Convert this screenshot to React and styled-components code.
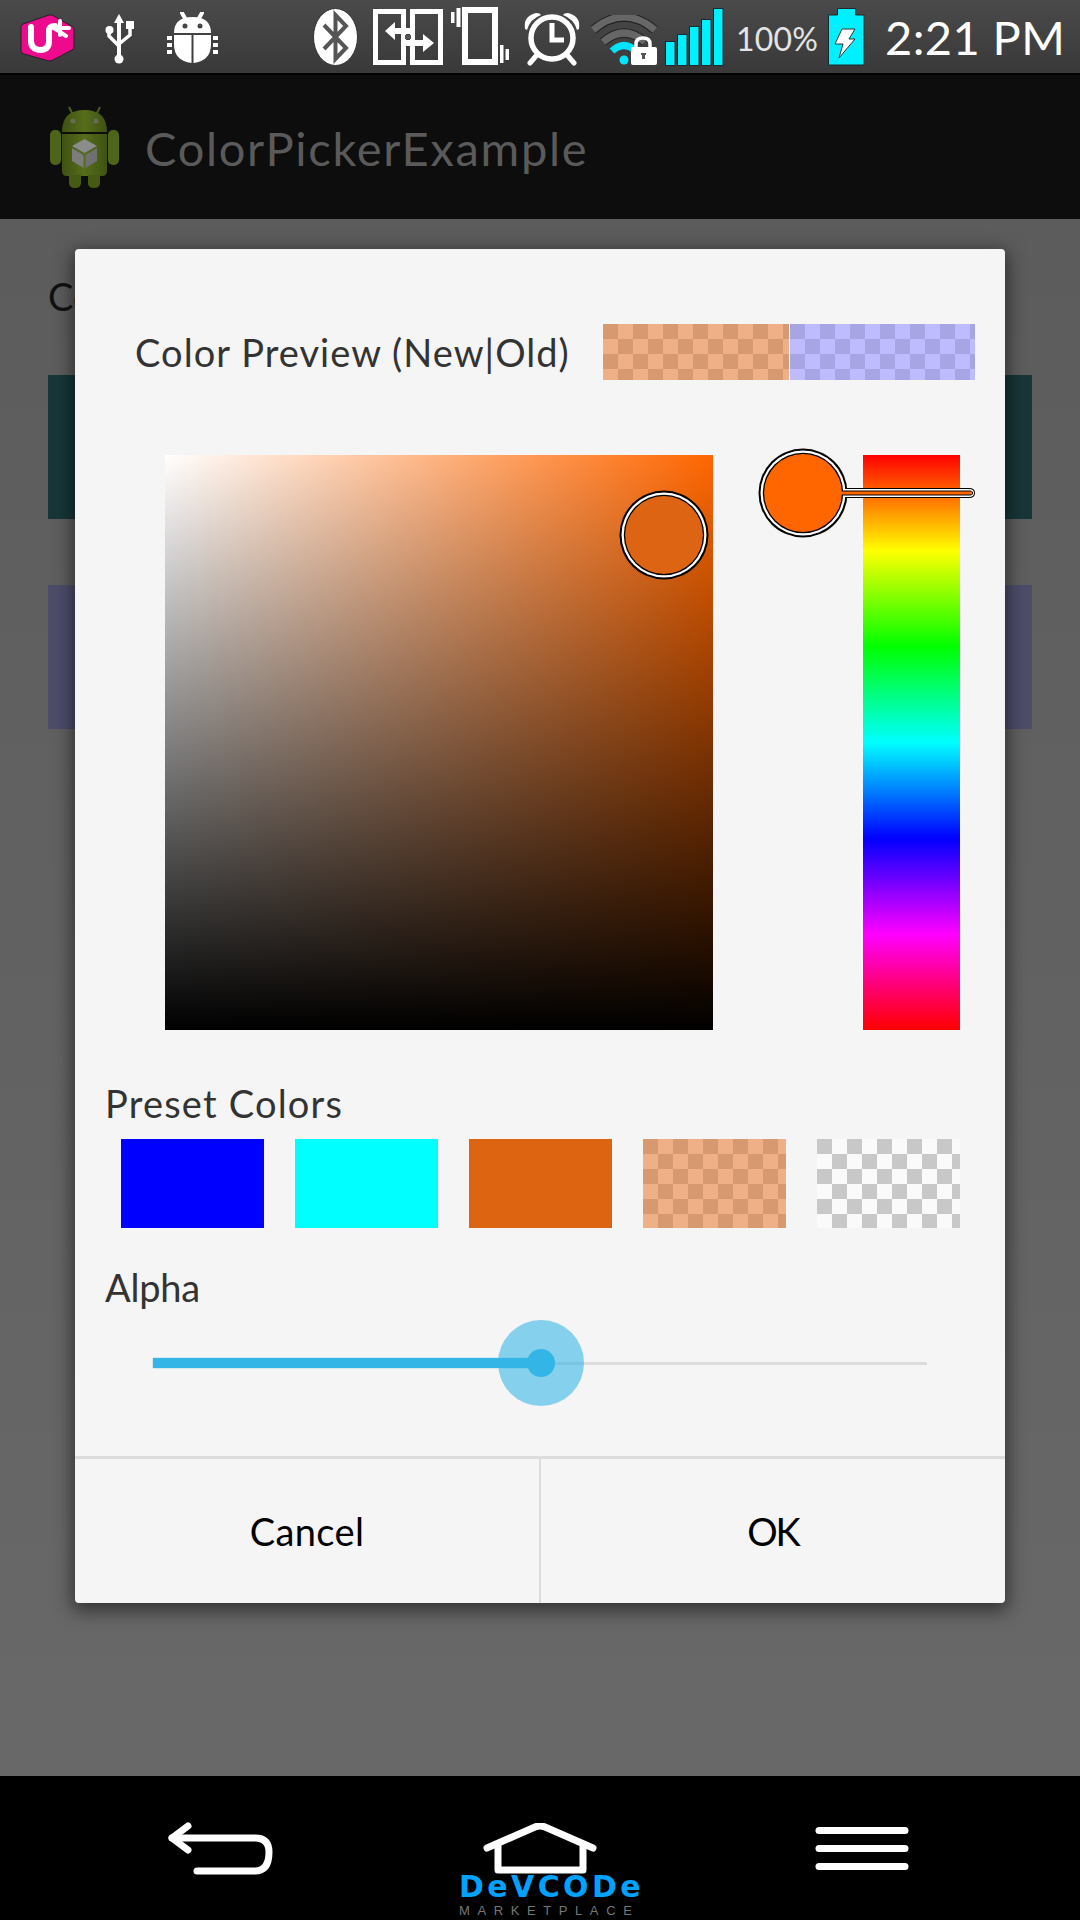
import React from "react";
import styled, { createGlobalStyle } from "styled-components";

const Global = createGlobalStyle`
  html, body { margin: 0; padding: 0; background: #000; }
  #root { width: 1080px; height: 1920px; overflow: hidden; }
  * { box-sizing: border-box; }
`;

const FONT = `"Lato", "Open Sans", sans-serif`;

const Page = styled.div`
  width: 1080px;
  height: 1920px;
  display: flex;
  flex-direction: column;
  font-family: ${FONT};
`;

/* ---------- status bar ---------- */
const StatusBar = styled.div`
  height: 75px;
  flex: none;
  display: flex;
  align-items: flex-start;
  background: linear-gradient(#4a4a4a, #393939);
  border-bottom: 2px solid #000;
`;
const StatusSlot = styled.svg`
  flex: none;
  display: block;
  margin-left: ${(p) => p.$left}px;
  margin-top: ${(p) => p.$top}px;
`;
const Percent = styled.span`
  flex: none;
  margin-left: 12px;
  margin-top: 16px;
  width: 81px;
  font-size: 32px;
  line-height: 46px;
  letter-spacing: 0.2px;
  color: #e4e4e4;
  white-space: nowrap;
`;
const Clock = styled.span`
  flex: none;
  margin-left: 20px;
  margin-top: 6px;
  font-size: 47px;
  line-height: 62px;
  letter-spacing: 0.4px;
  color: #fff;
  white-space: nowrap;
`;

/* ---------- action bar ---------- */
const ActionBar = styled.div`
  height: 144px;
  flex: none;
  display: flex;
  align-items: center;
  padding-left: 50px;
  background: #0d0d0d;
`;
const Title = styled.span`
  margin-left: 26px;
  margin-top: 2px;
  font-size: 47px;
  letter-spacing: 1.7px;
  color: #5a5a5a;
`;

/* ---------- content behind the dialog ---------- */
const Content = styled.div`
  position: relative;
  flex: 1;
  padding: 54px 48px 0;
  background: linear-gradient(#5c5c5c, #686868);
`;
const ContentLabel = styled.div`
  font-size: 38px;
  line-height: 46px;
  color: #111;
`;
const ColorBar = styled.div`
  height: 144px;
  margin-top: ${(p) => p.$top}px;
  background: ${(p) => p.$color};
`;

/* ---------- dialog ---------- */
const Scrim = styled.div`
  position: absolute;
  inset: 0;
  padding: 30px 75px 0;
`;
const Dialog = styled.div`
  height: 1354px;
  display: flex;
  flex-direction: column;
  background: #f5f5f5;
  border-radius: 4px;
  box-shadow: 0 5px 18px 3px rgba(0, 0, 0, 0.5);
  color: #333;
`;
const PreviewRow = styled.div`
  display: flex;
  align-items: center;
  justify-content: space-between;
  height: 56px;
  margin-top: 75px;
  padding: 0 30px 0 60px;
`;
const Label = styled.span`
  font-size: 38px;
  letter-spacing: 1.05px;
  white-space: nowrap;
`;
const PreviewPair = styled.div`
  display: flex;
  gap: 1px;
  background: #fff;
`;
const Checker = styled.div`
  width: ${(p) => p.$w}px;
  height: ${(p) => p.$h}px;
  background: conic-gradient(${(p) => p.$light} 25%, ${(p) => p.$dark} 0 50%, ${(p) => p.$light} 0 75%, ${(p) => p.$dark} 0);
  background-size: 30px 30px;
`;
const PickerRow = styled.div`
  display: flex;
  margin-top: 75px;
  padding-left: 90px;
`;
const SatVal = styled.div`
  position: relative;
  width: 548px;
  height: 575px;
  background: linear-gradient(to bottom, rgba(0, 0, 0, 0), #000), linear-gradient(to right, #fff, #ff6600);
`;
const HueBar = styled.div`
  position: relative;
  width: 97px;
  height: 575px;
  margin-left: 150px;
  background: linear-gradient(to bottom, #f00 0%, #ff0 16.67%, #0f0 33.33%, #0ff 50%, #00f 66.67%, #f0f 83.33%, #f00 100%);
`;
const Tracker = styled.svg`
  position: absolute;
  display: block;
  left: ${(p) => p.$left}px;
  top: ${(p) => p.$top}px;
`;
const SectionTitle = styled.div`
  margin-left: 30px;
  margin-top: ${(p) => p.$top}px;
  font-size: 38px;
  line-height: 46px;
  letter-spacing: ${(p) => p.$spacing}px;
`;
const Swatches = styled.div`
  display: flex;
  gap: 31px;
  margin-top: 13px;
  margin-left: 46px;
`;
const Swatch = styled.div`
  width: 143px;
  height: 89px;
  background: ${(p) => p.$color};
`;
const Slider = styled.div`
  position: relative;
  display: flex;
  align-items: center;
  width: 774px;
  height: 86px;
  margin-top: 10px;
  margin-left: 78px;
`;
const SliderFill = styled.div`
  width: 388px;
  height: 10px;
  background: #33b5e5;
  box-shadow: 0 0 1px #33b5e5;
`;
const SliderRest = styled.div`
  flex: 1;
  height: 3px;
  background: #dcdcdc;
`;
const Halo = styled.div`
  position: absolute;
  left: 345px;
  top: 0;
  width: 86px;
  height: 86px;
  display: flex;
  align-items: center;
  justify-content: center;
  border-radius: 50%;
  background: rgba(51, 181, 229, 0.58);
`;
const Knob = styled.div`
  width: 28px;
  height: 28px;
  border-radius: 50%;
  background: #33b5e5;
`;
const ButtonBar = styled.div`
  display: grid;
  grid-template-columns: 464px 2px 1fr;
  height: 147px;
  margin-top: auto;
  border-top: 3px solid #dcdcdc;
`;
const ButtonDivider = styled.div`
  background: #dcdcdc;
`;
const DialogButton = styled.div`
  display: flex;
  align-items: center;
  justify-content: center;
  font-size: 38px;
  letter-spacing: ${(p) => p.$spacing}px;
  color: #000;
`;

/* ---------- nav bar ---------- */
const NavBar = styled.div`
  height: 144px;
  flex: none;
  display: flex;
  align-items: flex-start;
  background: #000;
`;
const NavIcon = styled.svg`
  flex: none;
  display: block;
  margin-left: ${(p) => p.$left}px;
  margin-top: ${(p) => p.$top}px;
`;
const HomeLogo = styled.div`
  flex: none;
  width: 190px;
  margin-left: 200px;
  display: flex;
  flex-direction: column;
  padding-top: 47px;
  padding-left: 14px;
`;
const HomeGlyph = styled.svg`
  display: block;
  margin-left: -4px;
`;
const Brand = styled.div`
  height: 26px;
  margin-top: -1px;
  margin-left: -28px;
  font-family: "DejaVu Sans", sans-serif;
  font-weight: 700;
  font-size: 30px;
  line-height: 26px;
  letter-spacing: 3.4px;
  color: #00a2ff;
  white-space: nowrap;
`;
const Market = styled.div`
  margin-top: 4px;
  margin-left: -28px;
  font-family: "Liberation Sans", sans-serif;
  font-size: 13px;
  line-height: 14px;
  letter-spacing: 7.6px;
  color: #777;
  white-space: nowrap;
`;

const ULogo = () => (
  <StatusSlot $left={20} $top={14} width="55" height="48" viewBox="0 0 55 48">
    <path d="M1 13 Q1 11 3 10 L29 1 Q31 0.5 33 1.5 L53 13 Q54 14 54 16 L54 33 Q54 35 52 36 L33 46 Q31 47 29 47 L4 40 Q1 39 1 37 Z" fill="#ee0a8c" stroke="#222" strokeWidth="1" />
    <path d="M11 13 V27 Q11 35 20 36 Q29 36 29 27 V17 Q29 12 35 12" fill="none" stroke="#fff" strokeWidth="6" strokeLinecap="round" />
    <path d="M34 14 L46 22 M40 7 L40 21 M34 14 H49" fill="none" stroke="#fff" strokeWidth="4" strokeLinecap="round" />
  </StatusSlot>
);

const UsbIcon = () => (
  <StatusSlot $left={30} $top={12} width="30" height="52" viewBox="0 0 30 52">
    <path d="M14 2 L19 11 H9 Z" fill="#fff" />
    <path d="M14 8 V48" stroke="#fff" strokeWidth="4" fill="none" />
    <path d="M4 18 V24 L14 34 M25 14 V23 L14 32" stroke="#fff" strokeWidth="3.5" fill="none" />
    <circle cx="14" cy="47" r="4.5" fill="#fff" />
    <circle cx="4.5" cy="18" r="4" fill="#fff" />
    <rect x="21" y="9" width="8" height="8" fill="#fff" />
  </StatusSlot>
);

const BugIcon = () => (
  <StatusSlot $left={32} $top={12} width="52" height="52" viewBox="0 0 52 52">
    <path d="M15 1 L19 8 M35 1 L31 8" stroke="#fff" strokeWidth="4" strokeLinecap="round" />
    <path d="M7 21 Q7 5 25.500 5 Q44 5 44 21 Z" fill="#fff" />
    <circle cx="18" cy="14" r="2.500" fill="#444" />
    <circle cx="33" cy="14" r="2.500" fill="#444" />
    <path d="M7 23 H24.500 V51 Q7 49 7 32 Z M26.500 23 H44 V32 Q44 49 26.500 51 Z" fill="#fff" />
    <path d="M0 24 H5 V28 H0 Z M0 31 H5 V35 H0 Z M0 38 H5 V42 H0 Z M46 24 H51 V28 H46 Z M46 31 H51 V35 H46 Z M46 38 H51 V42 H46 Z" fill="#fff" />
  </StatusSlot>
);

const BluetoothIcon = () => (
  <StatusSlot $left={94} $top={8} width="45" height="58" viewBox="0 0 45 58">
    <ellipse cx="22.500" cy="29" rx="22" ry="28.500" fill="#fff" stroke="#333" strokeWidth="1" />
    <path d="M11 17 L33 40 L22.500 51 V7 L33 18 L11 41" fill="none" stroke="#555" strokeWidth="4" />
  </StatusSlot>
);

const SwapIcon = () => (
  <StatusSlot $left={15} $top={9} width="70" height="56" viewBox="0 0 70 56">
    <rect x="2.500" y="2.500" width="28" height="51" fill="none" stroke="#fff" strokeWidth="5" />
    <rect x="39.500" y="2.500" width="28" height="51" fill="none" stroke="#fff" strokeWidth="5" />
    <path d="M12 22 L22 13 V19 H37 V25 H22 V31 Z" fill="#fff" />
    <path d="M61 34 L50 25 V31 H33 V37 H50 V43 Z" fill="#fff" />
    <path d="M32 26 H38 V30 H32 Z" fill="#555" />
  </StatusSlot>
);

const VibrateIcon = () => (
  <StatusSlot $left={7} $top={7} width="60" height="58" viewBox="0 0 60 58">
    <rect x="15" y="3" width="30" height="52" fill="none" stroke="#fff" strokeWidth="6" />
    <path d="M1 5 H4.500 V16 H1 Z M6.500 1 H10.500 V20 H6.500 Z M50 38 H53.500 V56 H50 Z M55.500 42 H59 V53 H55.500 Z" fill="#fff" />
  </StatusSlot>
);

const AlarmIcon = () => (
  <StatusSlot $left={13} $top={10} width="58" height="56" viewBox="0 0 58 56">
    <circle cx="29" cy="28" r="21" fill="none" stroke="#fff" strokeWidth="5.500" />
    <path d="M2 19 Q0 6 13 3 Q17 3 18 5 Q7 9 4 20 Z M56 19 Q58 6 45 3 Q41 3 40 5 Q51 9 54 20 Z" fill="#fff" />
    <path d="M29 13 V30 H41" fill="none" stroke="#fff" strokeWidth="5" />
    <path d="M13 46 L7 53 M45 46 L51 53" stroke="#fff" strokeWidth="5" strokeLinecap="round" />
  </StatusSlot>
);

const WifiIcon = () => (
  <StatusSlot $left={10} $top={15} width="67" height="51" viewBox="0 0 67 51">
    <path d="M2 15 Q33 -11 64 15" fill="none" stroke="#222" strokeWidth="9" />
    <path d="M2 15 Q33 -11 64 15" fill="none" stroke="#666" strokeWidth="7" />
    <path d="M12 27 Q33 9 54 27" fill="none" stroke="#222" strokeWidth="9" />
    <path d="M12 27 Q33 9 54 27" fill="none" stroke="#666" strokeWidth="7" />
    <path d="M21 36 Q33 25 45 36" fill="none" stroke="#00e5ff" strokeWidth="7" />
    <circle cx="33" cy="45" r="4.500" fill="#00e5ff" />
    <path d="M45 34 V29 Q45 23 52 23 Q59 23 59 29 V34" fill="none" stroke="#fff" strokeWidth="3.500" />
    <rect x="40" y="32" width="26" height="18" rx="2" fill="#fff" />
    <path d="M50 38 H55 V40 H54 V44 H51 V40 H50 Z" fill="#555" />
  </StatusSlot>
);

const SignalIcon = () => (
  <StatusSlot $left={6} $top={8} width="60" height="58" viewBox="0 0 60 58">
    {[[1, 33], [13, 26], [25, 18], [37, 11], [49, 0]].map(([x, y]) => (
      <rect key={x} x={x + 0.5} y={y + 0.5} width="9.500" height={57 - y} fill="#00f0ff" stroke="#1a2a2e" />
    ))}
  </StatusSlot>
);

const BatteryIcon = () => (
  <StatusSlot $left={11} $top={8} width="37" height="58" viewBox="0 0 37 58">
    <path d="M9.500 0.500 H27.500 V7 H36 V57 H0.500 V7 H9.500 Z" fill="#00f0ff" stroke="#1a2a2e" />
    <path d="M14 21 H27 L21 31 H27 L11 50 L15 36 H7 Z" fill="#fff" stroke="#333" strokeWidth="1" />
  </StatusSlot>
);

const AndroidLogo = () => (
  <svg width="69" height="84" viewBox="0 0 69 84" style={{ flex: "none", display: "block" }}>
    <defs>
      <linearGradient id="ag" x1="0" x2="1" y1="0" y2="0">
        <stop offset="0" stopColor="#3f5212" />
        <stop offset="0.5" stopColor="#566d1b" />
        <stop offset="1" stopColor="#3f5212" />
      </linearGradient>
    </defs>
    <path d="M19 2 L23 10 M50 2 L46 10" stroke="#4a5f16" strokeWidth="2" />
    <path d="M12 27 Q12 5 34.500 5 Q57 5 57 27 Z" fill="url(#ag)" />
    <circle cx="23" cy="16" r="2.500" fill="#6a6a5a" />
    <circle cx="46" cy="16" r="2.500" fill="#6a6a5a" />
    <path d="M12 29 H57 V66 Q57 71 52 71 H17 Q12 71 12 66 Z" fill="url(#ag)" />
    <rect x="0" y="25" width="11" height="35" rx="5" fill="#4e6418" />
    <rect x="58" y="25" width="11" height="35" rx="5" fill="#4e6418" />
    <path d="M19 70 H31 V78 Q31 83 25 83 Q19 83 19 78 Z M38 70 H50 V78 Q50 83 44 83 Q38 83 38 78 Z" fill="#465a14" />
    <path d="M34.500 34 L47 41 L34.500 48 L22 41 Z" fill="#8c8c8c" />
    <path d="M22 43 L33.500 50 V63 L22 56 Z" fill="#7c7c7c" />
    <path d="M47 43 L35.500 50 V63 L47 56 Z" fill="#707070" />
  </svg>
);

const SvTracker = () => (
  <Tracker $left={454} $top={35} width="90" height="90" viewBox="0 0 90 90">
    <circle cx="45" cy="45" r="44.500" fill="#000" />
    <circle cx="45" cy="45" r="42.500" fill="#fff" />
    <circle cx="45" cy="45" r="40.200" fill="#000" />
    <circle cx="45" cy="45" r="38.900" fill="#dd6412" />
  </Tracker>
);

const HueTracker = () => (
  <Tracker $left={-105} $top={-7} width="220" height="90" viewBox="0 0 220 90">
    <path d="M80 40 H211 Q217 40 217 45 Q217 50 211 50 H80 Z" fill="#000" />
    <circle cx="45" cy="45" r="44.500" fill="#000" />
    <path d="M80 41 H211 Q216 41 216 45 Q216 49 211 49 H80 Z" fill="#fff" />
    <circle cx="45" cy="45" r="42.500" fill="#fff" />
    <path d="M80 42.500 H212 Q215 43 215 45 Q215 47 212 47.500 H80 Z" fill="#000" />
    <circle cx="45" cy="45" r="40.200" fill="#000" />
    <path d="M80 43.500 H214 V46.500 H80 Z" fill="#ff6600" />
    <circle cx="45" cy="45" r="38.900" fill="#ff6600" />
  </Tracker>
);

export default function App() {
  return (
    <Page>
      <Global />
      <StatusBar>
        <ULogo />
        <UsbIcon />
        <BugIcon />
        <BluetoothIcon />
        <SwapIcon />
        <VibrateIcon />
        <AlarmIcon />
        <WifiIcon />
        <SignalIcon />
        <Percent>100%</Percent>
        <BatteryIcon />
        <Clock>2:21 PM</Clock>
      </StatusBar>
      <ActionBar>
        <AndroidLogo />
        <Title>ColorPickerExample</Title>
      </ActionBar>
      <Content>
        <ContentLabel>Color</ContentLabel>
        <ColorBar $top={56} $color="#183638" />
        <ColorBar $top={66} $color="#4d4d6a" />
        <Scrim>
          <Dialog>
            <PreviewRow>
              <Label>Color Preview (New|Old)</Label>
              <PreviewPair>
                <Checker $w={186} $h={56} $dark="#d79a70" $light="#efb088" />
                <Checker $w={185} $h={56} $dark="#a7a5e4" $light="#bebcfe" />
              </PreviewPair>
            </PreviewRow>
            <PickerRow>
              <SatVal>
                <SvTracker />
              </SatVal>
              <HueBar>
                <HueTracker />
              </HueBar>
            </PickerRow>
            <SectionTitle $top={50} $spacing={1.2}>Preset Colors</SectionTitle>
            <Swatches>
              <Swatch $color="#0000ff" />
              <Swatch $color="#00ffff" />
              <Swatch $color="#dd6410" />
              <Checker $w={143} $h={89} $dark="#d79a70" $light="#efb088" />
              <Checker $w={143} $h={89} $dark="#c8c8c8" $light="#fafafa" />
            </Swatches>
            <SectionTitle $top={36} $spacing={-0.2}>Alpha</SectionTitle>
            <Slider>
              <SliderFill />
              <SliderRest />
              <Halo>
                <Knob />
              </Halo>
            </Slider>
            <ButtonBar>
              <DialogButton $spacing={0.4}>Cancel</DialogButton>
              <ButtonDivider />
              <DialogButton $spacing={-2}>OK</DialogButton>
            </ButtonBar>
          </Dialog>
        </Scrim>
      </Content>
      <NavBar>
        <NavIcon $left={167} $top={46} width="106" height="54" viewBox="0 0 106 54" fill="none" stroke="#fff" strokeWidth="7" strokeLinecap="round" strokeLinejoin="round">
          <path d="M21 4 L5 16 L21 28" />
          <path d="M5 16 H88 Q102 16 102 30 Q102 49 88 49 H30" />
        </NavIcon>
        <HomeLogo>
          <HomeGlyph width="114" height="52" viewBox="0 0 114 52" fill="none" stroke="#fff" strokeWidth="7" strokeLinecap="round" strokeLinejoin="round">
            <path d="M4 25 L52 4 Q57 2 62 4 L110 25" />
            <path d="M15 22 V47 H100 V22" />
          </HomeGlyph>
          <Brand>DeVCODe</Brand>
          <Market>MARKETPLACE</Market>
        </HomeLogo>
        <NavIcon $left={152} $top={51} width="94" height="44" viewBox="0 0 94 44" fill="#fff">
          <rect x="0.500" width="93" height="7" rx="3.500" />
          <rect x="0.500" y="18" width="93" height="7" rx="3.500" />
          <rect x="0.500" y="36" width="93" height="7" rx="3.500" />
        </NavIcon>
      </NavBar>
    </Page>
  );
}
